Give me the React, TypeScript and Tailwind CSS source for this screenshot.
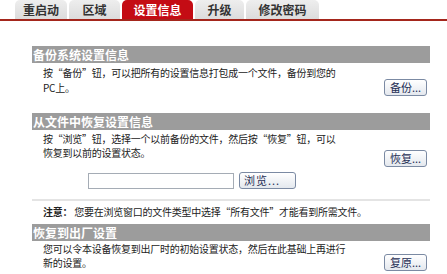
import React from 'react';

const font = { fontFamily: '"Noto Sans CJK SC", "Noto Sans", sans-serif' };

const tabs = ['重启动', '区域', '设置信息', '升级', '修改密码'];

const Tab: React.FC<{ label: string; active?: boolean; width: number }> = ({ label, active, width }) => (
  <div
    className={
      active
        ? 'h-[19px] rounded-t-[5px] bg-[#c40c14] text-white flex items-center justify-center text-[12px] font-bold'
        : 'h-[19px] rounded-t-[5px] bg-gradient-to-b from-[#eeeeee] to-[#dcdcdc] text-[#333] flex items-center justify-center text-[12px] font-bold'
    }
    style={{ width }}
  >
    {label}
  </div>
);

const SmallButton: React.FC<{ label: string; className?: string }> = ({ label, className }) => (
  <button
    className={
      'h-[17px] px-[4px] rounded-[3px] border border-[#7b8aa3] bg-gradient-to-b from-white to-[#e4e8ee] text-[11px] leading-none text-[#1f2f55] flex items-center ' +
      (className ?? '')
    }
  >
    {label}
  </button>
);

const Header: React.FC<{ title: string }> = ({ title }) => (
  <div className="h-[17px] bg-[#9c9c9c] text-white font-bold text-[12px] leading-[17px] pl-[1px]">{title}</div>
);

const body = 'text-[10px] tracking-[-0.25px]';

export default function App() {
  const widths = [52, 51, 71, 49, 73];
  return (
    <div className="w-[447px] h-[274px] overflow-hidden bg-white text-[#222]" style={font}>
      <div className="flex items-end gap-[2px] pl-[15px] border-b-2 border-[#a4261c] h-[21px]">
        {tabs.map((t, i) => (
          <Tab key={t} label={t} active={i === 2} width={widths[i]} />
        ))}
      </div>

      <div className="ml-[32px] w-[398px] mt-[25px]">
        <Header title="备份系统设置信息" />
        <div className="flex items-start">
          <div className={'flex-1 pl-[11px] pt-[2px] leading-[15px] ' + body}>
            按“备份”钮，可以把所有的设置信息打包成一个文件，备份到您的
            <br />
            PC上。
          </div>
          <SmallButton label="备份..." className="w-[43px] justify-center mt-[16px] mr-[3px]" />
        </div>

        <div className="mt-[17px]">
          <Header title="从文件中恢复设置信息" />
          <div className="flex items-start">
            <div className={'flex-1 pl-[11px] pt-[2px] leading-[14px] ' + body}>
              按“浏览”钮，选择一个以前备份的文件，然后按“恢复”钮，可以
              <br />
              恢复到以前的设置状态。
            </div>
            <SmallButton label="恢复..." className="w-[43px] justify-center mt-[20px] mr-[3px]" />
          </div>
          <div className="flex items-center ml-[56px] mt-[5px] gap-[5px]">
            <div className="w-[146px] h-[16px] border border-[#a5acb5] bg-white" />
            <SmallButton label="浏览..." className="w-[57px] justify-start tracking-[1px]" />
          </div>
        </div>

        <div className="mt-[10px] border-t-2 border-[#e4e4e4]" />
        <div className={'pl-[11px] mt-[3px] leading-[15px] ' + body}>
          <span className="font-bold">注意：</span> 您要在浏览窗口的文件类型中选择“所有文件”才能看到所需文件。
        </div>

        <div className="mt-[5px]">
          <Header title="恢复到出厂设置" />
          <div className="flex items-start">
            <div className={'flex-1 pl-[11px] pt-[1px] leading-[14px] ' + body}>
              您可以令本设备恢复到出厂时的初始设置状态，然后在此基础上再进行
              <br />
              新的设置。
            </div>
            <SmallButton label="复原..." className="w-[43px] justify-center mt-[13px] mr-[3px]" />
          </div>
        </div>
      </div>
    </div>
  );
}
